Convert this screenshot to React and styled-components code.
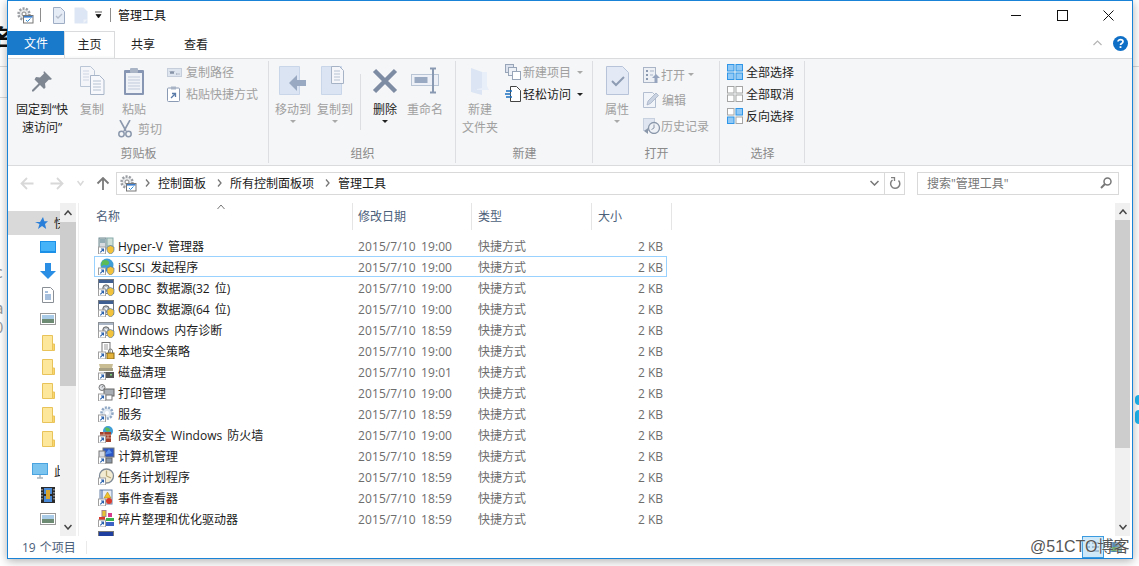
import React from 'react';
import styled, { createGlobalStyle } from 'styled-components';

const Global = createGlobalStyle`
  html, body { margin: 0; padding: 0; background: #fff; overflow: hidden; }
  * { box-sizing: border-box; }
  body { font-family: "Open Sans", "Noto Sans CJK SC", sans-serif; font-size: 12px; }
`;

const Page = styled.div`
  position: relative;
  width: 1139px;
  height: 566px;
  overflow: hidden;
  background: #fff;
  padding-left: 7px;
`;

const BackText = styled.span`
  position: absolute;
  left: ${p => p.$x}px;
  top: ${p => p.$y}px;
  font-size: ${p => p.$size || 15}px;
  font-weight: ${p => p.$bold ? 700 : 400};
  color: ${p => p.$color || '#999'};
  font-family: "Noto Sans CJK SC", sans-serif;
  line-height: 1;
`;

const BackLine = styled.div`
  position: absolute;
  left: ${p => p.$x}px;
  top: ${p => p.$y}px;
  width: 7px;
  height: 1px;
  background: #d9d9d9;
`;

const BlueDot = styled.div`
  position: absolute;
  left: 1135px;
  top: ${p => p.$y}px;
  width: 8px;
  height: ${p => p.$h}px;
  border-radius: 4px;
  background: #1eb4ee;
`;

const Window = styled.div`
  position: relative;
  width: 1126px;
  height: 559px;
  border: 1px solid #1883d7;
  background: #fff;
  display: flex;
  flex-direction: column;
  box-shadow: 0 2px 9px rgba(0, 0, 0, 0.32);
`;

const TitleBar = styled.div`
  height: 30px;
  display: flex;
  align-items: center;
  padding: 0 0 2px 8px;
  flex: none;
`;

const TitleSep = styled.div`
  width: 1px;
  height: 14px;
  background: #8d8d8d;
  margin: 0 ${p => p.$right || 0}px 0 ${p => p.$left || 0}px;
`;

const TitleGap = styled.div`
  width: ${p => p.$w}px;
  flex: none;
`;

const TitleText = styled.div`
  color: #111;
  font-size: 12px;
  margin-left: 7px;
`;

const WinControls = styled.div`
  margin-left: auto;
  display: flex;
  height: 100%;
  padding-right: 1px;
`;

const WinBtn = styled.div`
  width: 46px;
  display: flex;
  align-items: center;
  justify-content: center;
`;

const TabRow = styled.div`
  height: 27px;
  display: flex;
  align-items: flex-start;
  flex: none;
  position: relative;
  z-index: 1;
`;

const FileTab = styled.div`
  width: 56px;
  height: 24px;
  background: #1979ca;
  color: #fff;
  display: flex;
  align-items: center;
  justify-content: center;
`;

const Tab = styled.div`
  height: 27px;
  width: ${p => p.$w}px;
  display: flex;
  align-items: center;
  justify-content: center;
  padding-bottom: 3px;
  color: #222;
  background: ${p => p.$active ? 'linear-gradient(#fff 90%, #f5f6f7)' : 'transparent'};
  border: 1px solid ${p => p.$active ? '#dadbdc' : 'transparent'};
  border-bottom: none;
`;

const TabRight = styled.div`
  margin-left: auto;
  display: flex;
  align-items: center;
  gap: 11px;
  height: 24px;
  padding-right: 4px;
`;

const Ribbon = styled.div`
  height: 108px;
  flex: none;
  display: flex;
  background: #f5f6f7;
  border-top: 1px solid #dadbdc;
  border-bottom: 1px solid #dadbdc;
`;

const Group = styled.div`
  width: ${p => p.$w}px;
  display: flex;
  flex-direction: column;
  padding: 2px 0 1px;
  position: relative;
  &::after {
    content: '';
    position: absolute;
    right: 0;
    top: 2px;
    bottom: 2px;
    width: 1px;
    background: #dcdee1;
  }
`;

const GroupBody = styled.div`
  flex: 1;
  display: flex;
  padding-left: ${p => p.$pl || 0}px;
`;

const GroupLabel = styled.div`
  height: 20px;
  line-height: 20px;
  text-align: center;
  color: #8a8a8a;
`;

const LargeBtn = styled.div`
  width: ${p => p.$w}px;
  margin-right: ${p => p.$mr || 0}px;
  display: flex;
  flex-direction: column;
  align-items: center;
  color: ${p => p.$on ? '#222' : '#a0a0a0'};
  line-height: 18px;
  text-align: center;
  flex: none;
`;

const IconSlot = styled.div`
  height: 40px;
  display: flex;
  align-items: center;
  justify-content: center;
  padding-bottom: 1px;
`;

const Caret = styled.div`
  width: 0;
  height: 0;
  border-left: 3px solid transparent;
  border-right: 3px solid transparent;
  border-top: 3px solid ${p => p.$on ? '#222' : '#a9a9a9'};
  margin: ${p => p.$left !== undefined ? `0 0 0 ${p.$left}px` : '1px 0 0'};
`;

const SmallCol = styled.div`
  display: flex;
  flex-direction: column;
  padding-top: ${p => p.$pt || 0}px;
`;

const SmallBtn = styled.div`
  height: ${p => p.$h || 22}px;
  display: flex;
  align-items: center;
  gap: ${p => p.$gap || 0}px;
  color: ${p => p.$on ? '#222' : '#a0a0a0'};
  white-space: nowrap;
`;

const PasteCol = styled.div`
  width: 44px;
  margin-right: 5px;
  flex: none;
`;

const VSep = styled.div`
  width: 1px;
  height: 56px;
  margin: 13px 6px 0 6px;
  background: #dcdee1;
`;

const AddressRow = styled.div`
  height: 34px;
  flex: none;
  display: flex;
  align-items: center;
  padding-left: 11px;
`;

const NavBtn = styled.div`
  width: ${p => p.$w}px;
  margin-left: ${p => p.$ml || 0}px;
  display: flex;
  justify-content: center;
`;

const AddressBox = styled.div`
  width: 789px;
  height: 23px;
  margin-left: 2px;
  border: 1px solid #d9d9d9;
  display: flex;
  align-items: center;
  padding-left: 2px;
`;

const CrumbGap = styled.div`
  width: 8px;
  flex: none;
`;

const Crumb = styled.span`
  color: #1a1a1a;
  margin: 0 11px 0 8px;
`;

const AddrEnd = styled.div`
  margin-left: auto;
  display: flex;
  align-items: center;
  height: 100%;
`;

const AddrBtn = styled.div`
  width: ${p => p.$w}px;
  height: 100%;
  display: flex;
  align-items: center;
  justify-content: center;
  border-left: ${p => p.$line ? '1px solid #d9d9d9' : 'none'};
`;

const SearchBox = styled.div`
  width: 202px;
  height: 23px;
  margin-left: 12px;
  border: 1px solid #d9d9d9;
  display: flex;
  align-items: center;
  justify-content: space-between;
  padding: 0 6px 0 9px;
  color: #777;
`;

const Body = styled.div`
  flex: 1;
  min-height: 0;
  display: flex;
`;

const Side = styled.div`
  width: 52px;
  flex: none;
  padding-top: 11px;
  overflow: hidden;
`;

const SideRow = styled.div`
  height: 24px;
  margin-top: ${p => p.$mt || 0}px;
  display: flex;
  align-items: center;
  gap: 6px;
  padding-left: ${p => p.$pl}px;
  background: ${p => p.$sel ? '#d9d9d9' : 'transparent'};
  color: #222;
  white-space: nowrap;
`;

const Scroll = styled.div`
  width: ${p => p.$w || 16}px;
  flex: none;
  margin-top: 3px;
  display: flex;
  flex-direction: column;
  background: #f0f0f0;
`;

const ScrollBtn = styled.div`
  height: ${p => p.$h}px;
  flex: none;
  display: flex;
  align-items: center;
  justify-content: center;
`;

const Thumb = styled.div`
  height: ${p => p.$h}px;
  background: #cdcdcd;
  flex: none;
`;

const ScrollFill = styled.div`
  flex: 1;
`;

const ScrollEnd = styled.div`
  width: 2px;
  flex: none;
`;

const Main = styled.div`
  flex: 1;
  min-width: 0;
  padding-top: 3px;
  padding-left: 14px;
  overflow: hidden;
  position: relative;
  &::before {
    content: '';
    position: absolute;
    left: 2px;
    top: 3px;
    bottom: 0;
    width: 1px;
    background: #efefef;
  }
`;

const Header = styled.div`
  display: grid;
  grid-template-columns: 261px 119px 120px 80px;
  width: 580px;
  height: 27px;
  margin-left: 2px;
  position: relative;
`;

const HeadCell = styled.div`
  border-right: 1px solid #e5e5e5;
  padding-left: ${p => p.$pl}px;
  color: #4c607a;
  line-height: 27px;
`;

const SortMark = styled.div`
  position: absolute;
  left: 125px;
  top: 1px;
  display: flex;
`;

const List = styled.div`
  margin: 5px 0 0 4px;
  width: 573px;
`;

const Row = styled.div`
  height: 21px;
  display: grid;
  grid-template-columns: 263px 120px 120px 1fr;
  padding-right: 3px;
  align-items: center;
  border: 1px solid ${p => p.$focus ? '#99d1ff' : 'transparent'};
  color: #6d6d6d;
  word-spacing: 2px;
`;

const NameCell = styled.div`
  display: flex;
  align-items: center;
  gap: 3px;
  padding-left: 3px;
  color: #1a1a1a;
  white-space: pre;
`;

const Cell = styled.div`
  padding-top: 1px;
  letter-spacing: ${p => p.$num ? '0.1px' : '0'};
  text-align: ${p => p.$right ? 'right' : 'left'};
`;

const SizeCell = styled(Cell)`
  word-spacing: 0;
`;

const StatusBar = styled.div`
  height: 22px;
  flex: none;
  display: flex;
  align-items: center;
  padding-left: 14px;
  color: #4c607a;
`;

const StatusText = styled.div`
  padding-bottom: 1px;
  word-spacing: 1px;
`;

const StatusSep = styled.div`
  width: 1px;
  height: 13px;
  background: #eaeaea;
  margin-left: 10px;
`;

const ViewBtns = styled.div`
  margin-left: auto;
  display: flex;
  align-items: stretch;
  height: 100%;
  padding-right: 6px;
  gap: 2px;
`;

const ViewBtn = styled.div`
  width: ${p => p.$w}px;
  display: flex;
  align-items: center;
  justify-content: center;
  background: ${p => p.$on ? '#cde8f8' : 'transparent'};
  border: 1px solid ${p => p.$on ? '#3a9be0' : 'transparent'};
`;

const Watermark = styled.div`
  position: absolute;
  left: 1030px;
  top: 538px;
  font-family: "Liberation Sans", "Noto Sans CJK SC", sans-serif;
  font-size: 16px;
  line-height: 18px;
  color: #555;
  text-shadow: 0 0 2px #fff;
  white-space: nowrap;
`;

const I = ({ s = 16, w, h, children }) => (
  <svg width={w || s} height={h || s} viewBox={`0 0 ${w || s} ${h || s}`} style={{ display: 'block', flex: 'none' }}>{children}</svg>
);

const GearDoc = () => (
  <I s={18}>
    <circle cx="8" cy="8" r="5.5" fill="#e4e6e8" stroke="#9a9da1" strokeWidth="2.5" strokeDasharray="2 1.4" />
    <circle cx="8" cy="8" r="2" fill="#fff" stroke="#888" />
    <rect x="7.5" y="9.5" width="9.5" height="7.5" fill="#fff" stroke="#777" />
    <rect x="8" y="10" width="8.5" height="1.6" fill="#3d7fcf" />
    <path d="M10 14l1.5 1.5 3-3" fill="none" stroke="#2f8fd8" />
  </I>
);

const CheckDoc = () => (
  <I w={13} h={17}>
    <path d="M1.5.5h7l4 4v12h-11z" fill="#e6ecf6" stroke="#9fadc4" />
    <path d="M4 9l2 2 4-4" fill="none" stroke="#b3bccb" strokeWidth="1.3" />
  </I>
);

const BlankDoc = () => (
  <I w={14} h={17}>
    <path d="M.5.5h9l4 4v12h-13z" fill="#dde6f4" />
    <path d="M9.5 16.5v-4h4" fill="#eef2f9" />
  </I>
);

const QuickCaret = () => (
  <I w={9} h={8}><path d="M1 1h7M2 3.500h5L4.500 7z" fill="#111" stroke="#111" strokeWidth=".7" /></I>
);

const Pin = () => (
  <I w={22} h={22}>
    <path d="M13 1l8 8-2 1-1-.5-4 4 .5 4-1.5 1.5-4-4-6.5 6.5-1.5 0 0-1.5 6.5-6.5-4-4L5 7l4 .5 4-4-.5-1z" fill="#7f8793" />
  </I>
);

const Docs = () => (
  <I w={26} h={29}>
    <path d="M1.5.5h10l4 4v16h-14z" fill="#f3f5f9" stroke="#bac5d6" />
    <path d="M11.5 9.5h9l4.500 4.500v14.500h-13.500z" fill="#f6f8fb" stroke="#a8b5c9" />
    <path d="M4 5h6M4 8h6M4 11h6M4 14h6" stroke="#cfd6e2" />
    <path d="M14 15h8M14 18h8M14 21h8M14 24h8" stroke="#b8c2d2" />
  </I>
);

const Clipboard = () => (
  <I w={22} h={30}>
    <rect x="1" y="4" width="20" height="25" rx="1" fill="#8797b3" />
    <rect x="3" y="7" width="16" height="20" fill="#eff2f7" />
    <rect x="7" y="2" width="8" height="5" rx="1" fill="#a9b4c6" />
    <path d="M5 11h12M5 14h12M5 17h12M5 20h12M5 23h12" stroke="#c1cbdb" />
  </I>
);

const Scissors = () => (
  <I w={14} h={18}>
    <path d="M2 0l6 11M12 0L6 11" stroke="#8b98ad" strokeWidth="1.6" fill="none" />
    <circle cx="3.500" cy="14" r="2.700" fill="none" stroke="#8b98ad" strokeWidth="1.500" />
    <circle cx="10.500" cy="14" r="2.700" fill="none" stroke="#8b98ad" strokeWidth="1.500" />
  </I>
);

const PathIcon = () => (
  <I w={15} h={9}>
    <rect x=".5" y=".5" width="14" height="8" fill="#dfe5ee" stroke="#c6cedb" />
    <path d="M3 3l1 3 1-3 1 3 1-3M9 6h1.500M11.500 6h1" stroke="#8794a8" fill="none" />
  </I>
);

const PasteLink = () => (
  <I w={13} h={16}>
    <rect x=".5" y="2" width="12" height="13.500" rx="1" fill="#fff" stroke="#8a9ab4" />
    <rect x="4" y=".5" width="5" height="3" fill="#a8b4c6" />
    <path d="M4 12l4-4M5 7.500h3.500V11" stroke="#5a7aa8" strokeWidth="1.300" fill="none" />
  </I>
);

const MoveTo = ({ copy }) => (
  <I w={28} h={30}>
    <path d="M.5 .5h20v28h-20z" fill="#dbe4f3" stroke="#c9d5e8" />
    {copy
      ? <>
        <path d="M10.500 .5h8l4 4v13h-12z" fill="#f4f6fa" stroke="#a6b3c7" />
        <path d="M13 5h6M13 8h6M13 11h6M13 14h6" stroke="#b8c2d2" />
      </>
      : <path d="M27 14v6h-9v5l-8-8 8-8v5z" fill="#9aa9c2" />}
  </I>
);

const XIcon = () => (
  <I w={26} h={26}>
    <path d="M2.500 2.500l21 21M23.500 2.500l-21 21" stroke="#7d8ba3" strokeWidth="4.500" />
  </I>
);

const Rename = () => (
  <I w={29} h={27}>
    <rect x=".5" y="7.500" width="27" height="11" fill="#edf1f7" stroke="#b9c4d5" />
    <rect x="3.500" y="10" width="13" height="6" fill="#9aa9c2" />
    <path d="M19 1.500h6M19 25.500h6M22 1.500v24" stroke="#8a99b2" strokeWidth="2" />
  </I>
);

const NewFolder = () => (
  <I w={20} h={28}>
    <path d="M1 1l11 4v23l-11-3z" fill="#dce5f3" />
    <path d="M12 5h5v14l2 4H7v-1l5-1z" fill="#e9eff8" />
  </I>
);

const NewItem = () => (
  <I w={16} h={16}>
    <rect x=".5" y=".5" width="8" height="8" fill="#dce3ee" stroke="#98a5b9" />
    <rect x="3.500" y="3.500" width="8" height="8" fill="#eef1f6" stroke="#98a5b9" />
    <rect x="7.500" y="7.500" width="8" height="8" fill="#fff" stroke="#98a5b9" />
  </I>
);

const EasyAccess = () => (
  <I w={16} h={16}>
    <path d="M5.500 .5h6l4 4v11h-10z" fill="#fff" stroke="#444" />
    <path d="M1 5h6M0 8h6M1 11h6" stroke="#1a6fc0" strokeWidth="1.300" />
  </I>
);

const Props = () => (
  <I w={23} h={29}>
    <path d="M.5 .5h16l6 6v22h-22z" fill="#e4eaf5" stroke="#b7c3d8" />
    <path d="M6 15l4 4 8-8" fill="none" stroke="#8d9bb3" strokeWidth="2" />
  </I>
);

const OpenIcon = () => (
  <I w={17} h={16}>
    <rect x=".5" y=".5" width="12" height="15" fill="#edf0f5" stroke="#a9b5c7" />
    <path d="M3 3h2v2H3zM3 7h2v2H3zM3 11h2v2H3z" fill="#8a99b0" />
    <path d="M7 4h4M7 8h3" stroke="#a9b5c7" />
    <path d="M13 7l4 4h-2.500v5h-3v-5H9z" fill="#96a5bd" />
  </I>
);

const EditIcon = () => (
  <I w={16} h={16}>
    <path d="M.5 .5h9l3 3v12H.5z" fill="#f1f4f8" stroke="#b3bfd0" />
    <path d="M4 13l1-4 8-8 2.500 2.500-8 8z" fill="#c9d3e2" stroke="#9dabbf" strokeWidth=".7" />
  </I>
);

const HistoryIcon = () => (
  <I w={18} h={16}>
    <rect x=".5" y=".5" width="11" height="12" fill="#dfe6f1" stroke="#c6d0df" />
    <circle cx="11" cy="10" r="5.500" fill="#eef1f5" stroke="#8996aa" strokeWidth="1.300" />
    <path d="M11 6.500V10l-2.500 1.500" stroke="#8996aa" fill="none" />
    <path d="M1 13l4-3v6z" fill="#8996aa" />
  </I>
);

const Tiles = ({ fill = [] }) => (
  <I s={16}>
    {[[0, 0], [8.500, 0], [0, 8.500], [8.500, 8.500]].map(([x, y], i) => (
      <rect key={i} x={x + .5} y={y + .5} width="6.500" height="6.500"
        fill={fill[i] ? '#90c8f6' : '#fff'} stroke={fill[i] ? '#2f96e8' : '#a5a5a5'} />
    ))}
  </I>
);

const Chevron = ({ up, color = '#555', w = 9, sw = 1.500 }) => (
  <I w={w} h={6}>
    <path d={up ? `M.5 5L${w / 2} 1l${w / 2 - .5} 4` : `M.5 1L${w / 2} 5l${w / 2 - .5} -4`} fill="none" stroke={color} strokeWidth={sw} />
  </I>
);

const Arrow = ({ dir, color }) => (
  <I w={14} h={13}>
    <g transform={dir === 'right' ? 'rotate(180 7 6.500)' : dir === 'up' ? 'rotate(90 7 6.500)' : undefined}>
      <path d="M13.500 6.500H2M7 1L1.500 6.500 7 12" fill="none" stroke={color} strokeWidth="1.800" />
    </g>
  </I>
);

const CrumbArrow = () => (
  <I w={5} h={8}><path d="M1 .5l3 3.500-3 3.500" fill="none" stroke="#777" strokeWidth="1.300" /></I>
);

const Shortcut = () => (
  <>
    <rect x=".5" y="10" width="7" height="7" fill="#fff" stroke="#a0a0a0" />
    <path d="M2.300 15.300l3-3M3 12h2.500v2.500" fill="none" stroke="#2b62ad" strokeWidth="1.100" />
  </>
);

const Shield = () => <path d="M12.500 8.500l3.500 1.500v3c0 2-2 3.500-3.500 4-1.500-.5-3.500-2-3.500-4v-3z" fill="#f3c23c" stroke="#3e6ea8" strokeWidth=".6" />;

const AdminGear = () => (
  <>
    <circle cx="8" cy="9" r="3.200" fill="#bdc3cb" stroke="#555" strokeWidth=".9" />
    <circle cx="8" cy="9" r="1" fill="#fff" />
  </>
);

const rowIcons = {
  hyperv: <>
    <rect x="1" y="1" width="7" height="11" fill="#d7dce0" stroke="#6f8a90" />
    <path d="M2 3h5M2 5h5" stroke="#4f7f89" />
    <rect x="9" y="1" width="6" height="8" fill="#cfe0d8" stroke="#8aa" />
    <Shield />
  </>,
  iscsi: <>
    <circle cx="9" cy="7" r="6.500" fill="#3f9ed6" />
    <path d="M4 3c3-2 6-1 7 1s-2 4-4 3-3 2-4 1z" fill="#5bbb57" />
    <Shield />
  </>,
  odbc: <>
    <rect x=".5" y=".5" width="15" height="14" fill="#fff" stroke="#6f7782" />
    <rect x="1" y="1" width="14" height="3" fill="#3f5f92" />
    <AdminGear />
    <Shield />
  </>,
  mem: <>
    <rect x=".5" y="1.500" width="15" height="13" fill="#fff" stroke="#8a8f96" />
    <rect x="1" y="2" width="14" height="2" fill="#aab6c6" />
    <AdminGear />
    <Shield />
  </>,
  policy: <>
    <rect x="4" y=".5" width="8" height="11" fill="#fff" stroke="#777" />
    <path d="M6 3h4M6 5h4M6 7h4" stroke="#999" />
    <rect x="9" y="11" width="7" height="6" fill="#e3b23a" stroke="#8a6a14" />
    <path d="M10.500 11V9a2 2 0 0 1 4 0v2" fill="none" stroke="#777" />
  </>,
  disk: <>
    <path d="M1 1h14l-1 4H2z" fill="#c9bd94" />
    <rect x="1" y="5" width="14" height="3" fill="#a8a084" />
    <rect x="6" y="9" width="10" height="6" fill="#555" />
    <rect x="12" y="11" width="2" height="1.500" fill="#7ad17a" />
  </>,
  print: <>
    <circle cx="4" cy="3.500" r="3" fill="#dfe3e8" stroke="#777" />
    <path d="M4 3.500l1.500-2" stroke="#777" />
    <rect x="6" y="5" width="10" height="7" fill="#a9aeb5" stroke="#666" />
    <rect x="8" y="11" width="6" height="5" fill="#fff" stroke="#777" />
  </>,
  service: <>
    <circle cx="9" cy="8" r="5.500" fill="#dfe7f0" stroke="#8fa7c4" strokeWidth="2.500" strokeDasharray="2 1.300" />
    <circle cx="9" cy="8" r="2" fill="#fff" />
  </>,
  firewall: <>
    <circle cx="10" cy="5" r="5" fill="#3f9ed6" />
    <path d="M7 2c2-1 5 0 5 2s-3 2-4 1z" fill="#5bbb57" />
    <rect x="2" y="6" width="11" height="10" fill="#a2402c" />
    <path d="M2 9h11M2 12h11M6 6v3M10 9v3M6 12v4" stroke="#e6c9b8" strokeWidth=".7" />
  </>,
  computer: <>
    <rect x="5" y="1" width="11" height="9" fill="#2a56c6" stroke="#777" />
    <path d="M6 8l5-6 3 4z" fill="#5a90ea" />
    <rect x="1" y="4" width="6" height="9" fill="#d9dde2" stroke="#777" />
    <rect x="8" y="11" width="6" height="5" fill="#8b98a8" stroke="#666" />
  </>,
  task: <>
    <circle cx="8.500" cy="8" r="7" fill="#f4ecd2" stroke="#7f8a97" strokeWidth="1.300" />
    <path d="M8.500 8V2.500M8.500 8l4.500 2" stroke="#b9a878" strokeWidth="1.300" />
  </>,
  event: <>
    <rect x="2" y="1" width="12" height="14" fill="#e8edf5" stroke="#6882a8" />
    <path d="M4 1v14" stroke="#3f65a8" />
    <path d="M9.500 3l3.500 6H6z" fill="#f2c12e" stroke="#a98000" strokeWidth=".5" />
    <circle cx="11" cy="12" r="3" fill="#d93a2b" />
  </>,
  defrag: <>
    <rect x="4" y=".5" width="4" height="6" fill="#e5c533" stroke="#a88" />
    <rect x="10" y="3" width="4" height="4" fill="#d63a8c" />
    <rect x="1" y="7" width="6" height="3" fill="#d93a2b" />
    <rect x="8" y="8" width="8" height="3" fill="#35b04a" />
    <rect x="8" y="12" width="8" height="4" fill="#3b62c4" />
  </>,
  blank: <>
    <rect x=".5" y=".5" width="15" height="15" fill="#fff" stroke="#777" />
    <rect x="1" y="1" width="14" height="5" fill="#1f3fa0" />
  </>,
};

const RowIcon = ({ kind }) => (
  <I w={17} h={17}>
    {rowIcons[kind]}
    {kind !== 'blank' && <Shortcut />}
  </I>
);

const Monitor = ({ big }) => big ? (
  <I w={16} h={16}>
    <rect x=".5" y=".5" width="15" height="11" fill="#7cc4f0" stroke="#4aa3df" />
    <path d="M5 15h6M8 12v3" stroke="#a8b4bd" strokeWidth="1.500" />
  </I>
) : (
  <I w={16} h={12}>
    <rect x="0" y="0" width="16" height="12" fill="#1c8fe6" />
    <rect x="1" y="1" width="14" height="9" fill="#46b2f7" />
  </I>
);

const DownBlue = () => (
  <I w={16} h={16}><path d="M5 0h6v8h5l-8 8-8-8h5z" fill="#2a8fe4" /></I>
);

const DocLines = () => (
  <I w={12} h={16}>
    <path d="M.5 .5h8l3 3v12H.5z" fill="#fff" stroke="#8a8f96" />
    <path d="M3 5h3M3 8h6M3 10h6M3 12h6" stroke="#4b7fb9" />
  </I>
);

const Picture = () => (
  <I w={16} h={12}>
    <rect x=".5" y=".5" width="15" height="11" fill="#fff" stroke="#999" />
    <rect x="2" y="2" width="12" height="4" fill="#a9cbe7" />
    <rect x="2" y="6" width="12" height="4" fill="#6d8a72" />
  </I>
);

const Folder = () => (
  <I w={13} h={16}>
    <path d="M.5 .5h10v15H.5z" fill="#fde79b" stroke="#e8c35a" />
    <path d="M10.500 9h2v6.500h-2z" fill="#fbd66b" stroke="#e8c35a" />
  </I>
);

const Film = () => (
  <I w={14} h={16}>
    <rect x="0" y="0" width="14" height="16" fill="#2b2b2b" />
    <rect x="3" y="1" width="8" height="6" fill="#4b8ad6" />
    <rect x="3" y="9" width="8" height="6" fill="#4b8ad6" />
    <rect x="5" y="3" width="4" height="9" fill="#d9a52e" />
    <path d="M1 2v12M13 2v12" stroke="#ddd" strokeDasharray="1.500 1.500" />
  </I>
);

const Star = () => (
  <I w={13} h={13}><path d="M8 0l1.300 4.200H13L10 7l1.200 5L7 9l-4 3 1.500-5L0 5h5z" fill="#2a7fd8" /></I>
);

const SearchGlass = () => (
  <I w={12} h={12}>
    <circle cx="7.500" cy="4.500" r="3.500" fill="none" stroke="#777" strokeWidth="1.500" />
    <path d="M5 7l-4 4" stroke="#777" strokeWidth="2" />
  </I>
);

const Refresh = () => (
  <I w={12} h={13}>
    <path d="M9.500 3.500A4.600 4.600 0 1 1 3.500 3" fill="none" stroke="#808080" strokeWidth="1.500" />
    <path d="M2 .5h3.500V4" fill="none" stroke="#808080" strokeWidth="1.300" />
  </I>
);

const Help = () => (
  <I w={15} h={15}>
    <circle cx="7.500" cy="7.500" r="7.500" fill="#0f6fc6" />
    <path d="M5 5.500C5 3 10 3 10 5.500c0 2-2.500 2-2.500 3.500" fill="none" stroke="#fff" strokeWidth="1.700" />
    <rect x="6.600" y="10.200" width="1.800" height="1.800" fill="#fff" />
  </I>
);

const rows = [
  ['hyperv', 'Hyper-V 管理器', '19:00'],
  ['iscsi', 'iSCSI 发起程序', '19:00', true],
  ['odbc', 'ODBC 数据源(32 位)', '19:00'],
  ['odbc', 'ODBC 数据源(64 位)', '19:00'],
  ['mem', 'Windows 内存诊断', '18:59'],
  ['policy', '本地安全策略', '19:00'],
  ['disk', '磁盘清理', '19:01'],
  ['print', '打印管理', '19:00'],
  ['service', '服务', '18:59'],
  ['firewall', '高级安全 Windows 防火墙', '19:00'],
  ['computer', '计算机管理', '18:59'],
  ['task', '任务计划程序', '18:59'],
  ['event', '事件查看器', '18:59'],
  ['defrag', '碎片整理和优化驱动器', '18:59'],
];

const sideItems = [
  [32, <Monitor />], [32, <DownBlue />], [34, <DocLines />], [32, <Picture />],
  [34, <Folder />], [34, <Folder />], [34, <Folder />], [34, <Folder />], [34, <Folder />],
];

export default function App() {
  return (
    <Page>
      <Global />
      <BackText $x={-8} $y={24} $size={22} $bold $color="#111">名</BackText>
      <BackLine $x={0} $y={66} />
      <BackLine $x={0} $y={97} />
      <BackText $x={-5} $y={264}>c</BackText>
      <BackText $x={-5} $y={300}>a</BackText>
      <BackText $x={-5} $y={319}>0</BackText>
      <BackLine $x={1132} $y={66} />
      <BlueDot $y={395} $h={10} />
      <BlueDot $y={410} $h={14} />

      <Window>
        <TitleBar>
          <GearDoc />
          <TitleSep $left={6} $right={11} />
          <CheckDoc />
          <TitleGap $w={9} />
          <BlankDoc />
          <TitleGap $w={6} />
          <QuickCaret />
          <TitleSep $left={7} />
          <TitleText>管理工具</TitleText>
          <WinControls>
            <WinBtn><I w={11} h={11}><path d="M0 5.500h10" stroke="#111" /></I></WinBtn>
            <WinBtn><I w={11} h={11}><rect x=".5" y=".5" width="10" height="10" fill="none" stroke="#111" /></I></WinBtn>
            <WinBtn><I w={11} h={11}><path d="M.5 .5l10 10M10.500 .5l-10 10" stroke="#111" /></I></WinBtn>
          </WinControls>
        </TitleBar>

        <TabRow>
          <FileTab>文件</FileTab>
          <Tab $active $w={51}>主页</Tab>
          <Tab $w={56}>共享</Tab>
          <Tab $w={50}>查看</Tab>
          <TabRight>
            <Chevron up color="#b5b5b5" w={9} sw={1.200} />
            <Help />
          </TabRight>
        </TabRow>

        <Ribbon>
          <Group $w={261}>
            <GroupBody $pl={4}>
              <LargeBtn $w={60} $on $mr={6}><IconSlot><Pin /></IconSlot>固定到“快<br />速访问”</LargeBtn>
              <LargeBtn $w={28} $mr={12}><IconSlot><Docs /></IconSlot>复制</LargeBtn>
              <PasteCol>
                <LargeBtn $w={32}><IconSlot><Clipboard /></IconSlot>粘贴</LargeBtn>
                <SmallBtn $h={20} $gap={6}><Scissors />剪切</SmallBtn>
              </PasteCol>
              <SmallCol>
                <SmallBtn $gap={4}><PathIcon />复制路径</SmallBtn>
                <SmallBtn $gap={6}><PasteLink />粘贴快捷方式</SmallBtn>
              </SmallCol>
            </GroupBody>
            <GroupLabel>剪贴板</GroupLabel>
          </Group>

          <Group $w={187}>
            <GroupBody $pl={5}>
              <LargeBtn $w={38} $mr={4}><IconSlot><MoveTo /></IconSlot>移动到<Caret /></LargeBtn>
              <LargeBtn $w={38}><IconSlot><MoveTo copy /></IconSlot>复制到<Caret /></LargeBtn>
              <VSep />
              <LargeBtn $w={36} $on $mr={2}><IconSlot><XIcon /></IconSlot>删除<Caret $on /></LargeBtn>
              <LargeBtn $w={40}><IconSlot><Rename /></IconSlot>重命名</LargeBtn>
            </GroupBody>
            <GroupLabel>组织</GroupLabel>
          </Group>

          <Group $w={137}>
            <GroupBody $pl={5}>
              <LargeBtn $w={38} $mr={6}><IconSlot><NewFolder /></IconSlot>新建<br />文件夹</LargeBtn>
              <SmallCol>
                <SmallBtn $gap={2}><NewItem />新建项目<Caret $left={4} /></SmallBtn>
                <SmallBtn $on $gap={2}><EasyAccess />轻松访问<Caret $left={4} $on /></SmallBtn>
              </SmallCol>
            </GroupBody>
            <GroupLabel>新建</GroupLabel>
          </Group>

          <Group $w={127}>
            <GroupBody $pl={7}>
              <LargeBtn $w={34} $mr={9}><IconSlot><Props /></IconSlot>属性<Caret /></LargeBtn>
              <SmallCol $pt={1}>
                <SmallBtn $h={25.500} $gap={1}><OpenIcon />打开<Caret $left={2} /></SmallBtn>
                <SmallBtn $h={25.500} $gap={3}><EditIcon />编辑</SmallBtn>
                <SmallBtn $h={25.500}><HistoryIcon />历史记录</SmallBtn>
              </SmallCol>
            </GroupBody>
            <GroupLabel>打开</GroupLabel>
          </Group>

          <Group $w={85}>
            <GroupBody $pl={7}>
              <SmallCol>
                <SmallBtn $on $gap={3}><Tiles fill={[1, 1, 1, 1]} />全部选择</SmallBtn>
                <SmallBtn $on $gap={3}><Tiles />全部取消</SmallBtn>
                <SmallBtn $on $gap={3}><Tiles fill={[0, 1, 1, 0]} />反向选择</SmallBtn>
              </SmallCol>
            </GroupBody>
            <GroupLabel>选择</GroupLabel>
          </Group>
        </Ribbon>

        <AddressRow>
          <NavBtn $w={16}><Arrow color="#d8d8d8" /></NavBtn>
          <NavBtn $w={44}><Arrow dir="right" color="#d8d8d8" /></NavBtn>
          <NavBtn $w={2}><Chevron color="#d8d8d8" w={7} /></NavBtn>
          <NavBtn $w={22} $ml={11}><Arrow dir="up" color="#7a7a7a" /></NavBtn>
          <AddressBox>
            <GearDoc />
            <CrumbGap />
            <CrumbArrow />
            <Crumb>控制面板</Crumb>
            <CrumbArrow />
            <Crumb>所有控制面板项</Crumb>
            <CrumbArrow />
            <Crumb>管理工具</Crumb>
            <AddrEnd>
              <AddrBtn $w={20}><Chevron color="#777" /></AddrBtn>
              <AddrBtn $w={20} $line><Refresh /></AddrBtn>
            </AddrEnd>
          </AddressBox>
          <SearchBox>搜索"管理工具"<SearchGlass /></SearchBox>
        </AddressRow>

        <Body>
          <Side>
            <SideRow $sel $pl={27}><Star />快</SideRow>
            {sideItems.map(([pl, icon], i) => <SideRow key={i} $pl={pl}>{icon}</SideRow>)}
            <SideRow $pl={24} $mt={8}><Monitor big />此</SideRow>
            <SideRow $pl={33}><Film /></SideRow>
            <SideRow $pl={32}><Picture /></SideRow>
          </Side>
          <Scroll>
            <ScrollBtn $h={19}><Chevron up color="#444" w={8} /></ScrollBtn>
            <Thumb $h={164} />
            <ScrollFill />
            <ScrollBtn $h={18}><Chevron color="#444" w={8} /></ScrollBtn>
          </Scroll>
          <Main>
            <Header>
              <HeadCell $pl={4}>名称<SortMark><Chevron up color="#777" w={8} sw={1} /></SortMark></HeadCell>
              <HeadCell $pl={5}>修改日期</HeadCell>
              <HeadCell $pl={6}>类型</HeadCell>
              <HeadCell $pl={6}>大小</HeadCell>
            </Header>
            <List>
              {rows.map(([kind, name, time, focus]) => (
                <Row key={name} $focus={focus}>
                  <NameCell><RowIcon kind={kind} />{name}</NameCell>
                  <Cell $num>2015/7/10 {time}</Cell>
                  <Cell>快捷方式</Cell>
                  <SizeCell $right>2 KB</SizeCell>
                </Row>
              ))}
              <Row><NameCell><RowIcon kind="blank" /></NameCell></Row>
            </List>
          </Main>
          <Scroll $w={15}>
            <ScrollBtn $h={17}><Chevron up color="#444" w={8} /></ScrollBtn>
            <Thumb $h={228} />
            <ScrollFill />
            <ScrollBtn $h={18}><Chevron color="#444" w={8} /></ScrollBtn>
          </Scroll>
          <ScrollEnd />
        </Body>

        <StatusBar>
          <StatusText>19 个项目</StatusText>
          <StatusSep />
          <ViewBtns>
            <ViewBtn $on $w={22}>
              <I w={14} h={12}><path d="M1 2h3M6 2h7M1 6h3M6 6h7M1 10h3M6 10h7" stroke="#6a8fb0" /></I>
            </ViewBtn>
            <ViewBtn $w={20}>
              <I w={14} h={12}><rect x="1" y="1" width="12" height="10" fill="#4a7fa8" /><rect x="2" y="6" width="10" height="4" fill="#5da05a" /></I>
            </ViewBtn>
          </ViewBtns>
        </StatusBar>
      </Window>
      <Watermark>@51CTO博客</Watermark>
    </Page>
  );
}
